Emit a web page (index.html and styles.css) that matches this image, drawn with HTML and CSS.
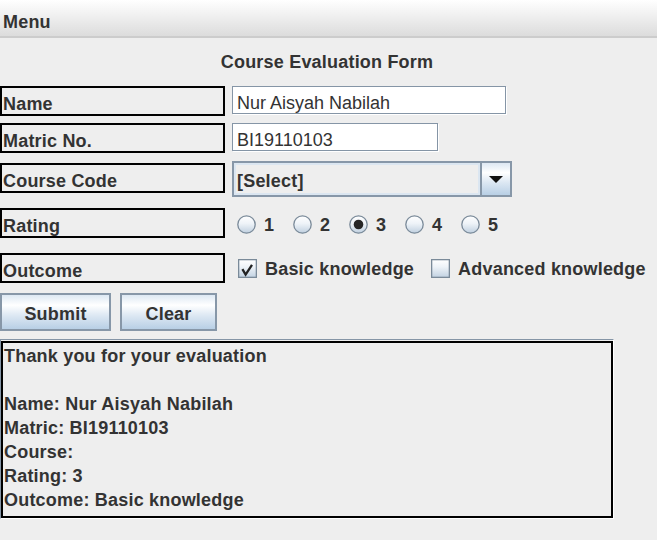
FILE: index.html
```html
<!DOCTYPE html>
<html>
<head>
<meta charset="utf-8">
<title>Course Evaluation Form</title>
<link rel="stylesheet" href="styles.css">
</head>
<body>
<div class="menubar"><span class="menu">Menu</span></div>
<div class="title">Course Evaluation Form</div>
<div class="form">
  <div class="row r1">
    <div class="lbl">Name</div>
    <div class="field f-name">Nur Aisyah Nabilah</div>
  </div>
  <div class="row r2">
    <div class="lbl">Matric No.</div>
    <div class="field f-matric">BI19110103</div>
  </div>
  <div class="row r3">
    <div class="lbl lbl-combo">Course Code</div>
    <div class="combo">
      <div class="combo-value">[Select]</div>
      <div class="combo-btn">
        <svg width="14" height="7" viewBox="0 0 14 7"><polygon points="0,0 14,0 7,7" fill="#111"/></svg>
      </div>
    </div>
  </div>
  <div class="row r4">
    <div class="lbl">Rating</div>
    <div class="radios">
      <span class="opt"><svg class="radio" width="19" height="19" viewBox="0 0 19 19"><defs><linearGradient id="rg" x1="0" y1="0" x2="0" y2="1"><stop offset="0" stop-color="#ffffff"/><stop offset="0.45" stop-color="#eef3f8"/><stop offset="1" stop-color="#bfcfdf"/></linearGradient></defs><circle cx="9.5" cy="9.5" r="8.7" fill="url(#rg)" stroke="#7a8a99" stroke-width="1.3"/></svg><span>1</span></span>
      <span class="opt"><svg class="radio" width="19" height="19" viewBox="0 0 19 19"><circle cx="9.5" cy="9.5" r="8.7" fill="url(#rg)" stroke="#7a8a99" stroke-width="1.3"/></svg><span>2</span></span>
      <span class="opt"><svg class="radio" width="19" height="19" viewBox="0 0 19 19"><circle cx="9.5" cy="9.5" r="8.7" fill="url(#rg)" stroke="#7a8a99" stroke-width="1.3"/><circle cx="9.5" cy="9.5" r="4.8" fill="#262626"/></svg><span>3</span></span>
      <span class="opt"><svg class="radio" width="19" height="19" viewBox="0 0 19 19"><circle cx="9.5" cy="9.5" r="8.7" fill="url(#rg)" stroke="#7a8a99" stroke-width="1.3"/></svg><span>4</span></span>
      <span class="opt"><svg class="radio" width="19" height="19" viewBox="0 0 19 19"><circle cx="9.5" cy="9.5" r="8.7" fill="url(#rg)" stroke="#7a8a99" stroke-width="1.3"/></svg><span>5</span></span>
    </div>
  </div>
  <div class="row r5">
    <div class="lbl">Outcome</div>
    <div class="checks">
      <span class="opt chk-opt"><svg class="check" width="19" height="19" viewBox="0 0 19 19"><defs><linearGradient id="cg" x1="0" y1="0" x2="0" y2="1"><stop offset="0" stop-color="#ffffff"/><stop offset="0.4" stop-color="#eef3f8"/><stop offset="1" stop-color="#c2d2e2"/></linearGradient></defs><rect x="0.65" y="0.65" width="17.7" height="17.7" fill="url(#cg)" stroke="#7a8a99" stroke-width="1.3"/><polyline points="4.4,10.2 7.6,15.6 14,5.8" fill="none" stroke="#222" stroke-width="2.3" stroke-linejoin="miter"/></svg><span>Basic knowledge</span></span>
      <span class="opt chk-opt"><svg class="check" width="19" height="19" viewBox="0 0 19 19"><rect x="0.65" y="0.65" width="17.7" height="17.7" fill="url(#cg)" stroke="#7a8a99" stroke-width="1.3"/></svg><span>Advanced knowledge</span></span>
    </div>
  </div>
</div>
<div class="buttons">
  <button class="btn btn-submit">Submit</button>
  <button class="btn btn-clear">Clear</button>
</div>
<div class="output">
  <div class="output-inner">
    <div class="line">Thank you for your evaluation</div>
    <div class="line">&nbsp;</div>
    <div class="line">Name: Nur Aisyah Nabilah</div>
    <div class="line">Matric: BI19110103</div>
    <div class="line">Course: </div>
    <div class="line">Rating: 3</div>
    <div class="line">Outcome: Basic knowledge</div>
  </div>
</div>
</body>
</html>
```
FILE: styles.css
```css
html, body {
  margin: 0;
  padding: 0;
}
body {
  background: #eeeeee;
  font-family: "Liberation Sans", Arial, sans-serif;
  font-size: 18px;
  color: #333333;
  width: 657px;
  height: 540px;
  overflow: hidden;
}
.menubar {
  box-sizing: border-box;
  height: 38px;
  padding: 8px 0 0 3px;
  background: linear-gradient(#ffffff, #dcdcdc);
  border-bottom: 2px solid #cccccc;
}
.menu {
  font-weight: bold;
  line-height: 29px;
  letter-spacing: 0.2px;
}
.title {
  margin-top: 12px;
  line-height: 24px;
  text-align: center;
  font-weight: bold;
  letter-spacing: 0.2px;
  padding-right: 3px;
}
.form {
  margin-top: 12px;
}
.row {
  display: flex;
  align-items: flex-start;
  gap: 7px;
}
.r2 { margin-top: 7px; }
.r3 { margin-top: 8px; }
.r4 { margin-top: 11px; align-items: center; }
.r5 { margin-top: 15px; align-items: center; }
.lbl {
  box-sizing: border-box;
  width: 225px;
  height: 30px;
  flex: none;
  border: 2px solid #000000;
  padding: 4px 0 0 1px;
  line-height: 24px;
  font-weight: bold;
  letter-spacing: 0.2px;
}
.lbl-combo { margin-top: 2px; }
.field {
  box-sizing: border-box;
  height: 28px;
  background: #ffffff;
  border: 1px solid #8595a6;
  box-shadow: 1px 1px 0 #ffffff;
  padding: 6px 0 0 4px;
  line-height: 21px;
  white-space: nowrap;
}
.f-name { width: 274px; }
.f-matric { width: 206px; }
.combo {
  box-sizing: border-box;
  width: 280px;
  height: 36px;
  display: flex;
  border: 2px solid #8797a8;
}
.combo-value {
  flex: 1;
  background: #eeeeee;
  box-shadow: inset 0 0 0 2px #dbe6f1;
  padding: 2px 0 0 3px;
  line-height: 32px;
  font-weight: bold;
  letter-spacing: 0.2px;
}
.combo-btn {
  width: 28px;
  border-left: 2px solid #8797a8;
  display: flex;
  align-items: center;
  justify-content: center;
  background: linear-gradient(#dde8f3 0%, #ffffff 30%, #dde8f3 60%, #b8cfe5 100%);
}
.radios {
  display: flex;
  align-items: center;
  gap: 18.8px;
  margin-left: 5px;
  margin-top: 3px;
}
.checks {
  display: flex;
  align-items: center;
  gap: 17px;
  margin-left: 6px;
  margin-top: 1px;
}
.opt {
  display: inline-flex;
  align-items: center;
  gap: 8px;
  font-weight: bold;
  letter-spacing: 0.2px;
  line-height: 22px;
}
.radio, .check {
  display: block;
  flex: none;
}
.radio { margin-top: -1px; }
.check { margin-top: -1px; }
.buttons {
  display: flex;
  gap: 9px;
  margin-top: 10px;
}
.btn {
  box-sizing: border-box;
  height: 38px;
  margin: 0;
  padding: 4px 0 0 0;
  border: 2px solid #8797a8;
  background: linear-gradient(#dde8f3 0%, #ffffff 30%, #dde8f3 60%, #b8cfe5 100%);
  font-family: "Liberation Sans", Arial, sans-serif;
  font-size: 18px;
  font-weight: bold;
  letter-spacing: 0.2px;
  color: #333333;
}
.btn-submit { width: 111px; }
.btn-clear { width: 97px; }
.output {
  box-sizing: border-box;
  margin-top: 8px;
  width: 614px;
  height: 180px;
  border-top: 1px solid #8595a6;
  border-left: 1px solid #8595a6;
  border-right: 1px solid #ffffff;
  border-bottom: 1px solid #ffffff;
  padding-top: 1px;
}
.output-inner {
  box-sizing: border-box;
  height: 100%;
  border: 2px solid #000000;
  padding: 1px 0 0 1px;
  font-weight: bold;
  letter-spacing: 0.2px;
}
.line {
  line-height: 24px;
  white-space: pre;
}
```
